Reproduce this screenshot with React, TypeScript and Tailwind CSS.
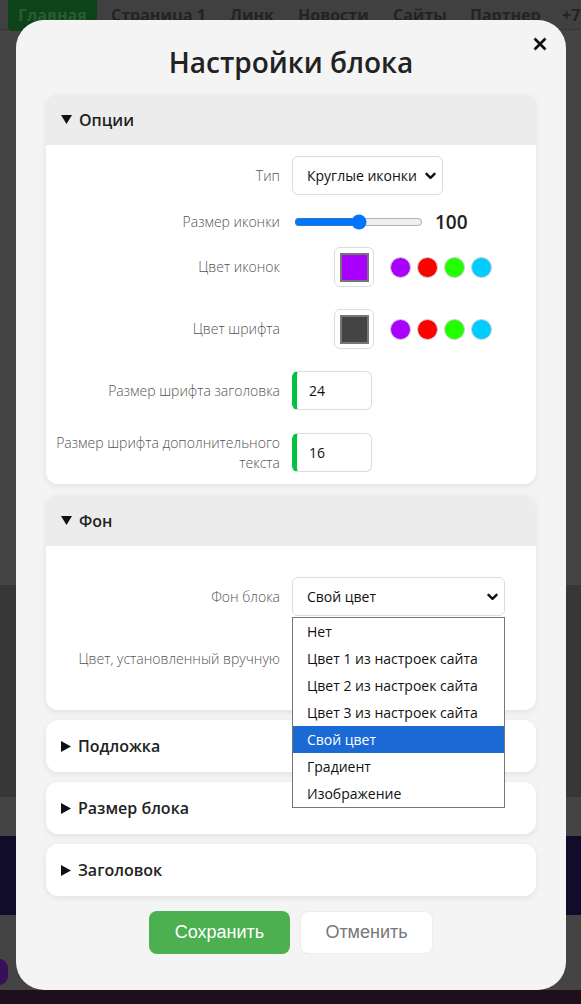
import React from "react";

const labelCls =
  "w-[234px] shrink-0 text-right text-[14px] font-light leading-[20px] text-[#555]";

function Chevron() {
  return (
    <svg width="11" height="8" viewBox="0 0 11 8" className="shrink-0">
      <polyline points="1.5,1.8 5.5,5.8 9.5,1.8" fill="none" stroke="#111" strokeWidth="2.4" strokeLinecap="round" strokeLinejoin="round" />
    </svg>
  );
}

function TriDown() {
  return (
    <svg width="11" height="9" viewBox="0 0 11 9" className="shrink-0">
      <polygon points="0,0 11,0 5.5,9" fill="#111" />
    </svg>
  );
}

function TriRight() {
  return (
    <svg width="10" height="11" viewBox="0 0 10 11" className="shrink-0">
      <polygon points="0,0 10,5.5 0,11" fill="#111" />
    </svg>
  );
}

function Swatch({ color }: { color: string }) {
  return (
    <div className="ml-[42px] flex h-[40px] w-[40px] items-center justify-center rounded-[6px] border border-[#dcdcdc] bg-white">
      <div className="h-[29px] w-[29px] border-2 border-[#767676]" style={{ background: color }} />
    </div>
  );
}

function Dots() {
  const colors = ["#aa00ff", "#ff0000", "#22ff00", "#00ccff"];
  return (
    <div className="ml-[16px] flex gap-[6px]">
      {colors.map((c) => (
        <div key={c} className="h-[21px] w-[21px] rounded-full border border-[#d0d0d0]" style={{ background: c }} />
      ))}
    </div>
  );
}

function NumInput({ value }: { value: string }) {
  return (
    <div className="flex h-[39px] w-[80px] items-center rounded-[6px] border border-l-[5px] border-[#dcdcdc] border-l-[#00c43f] bg-white pl-[12px] text-[14px] text-[#111]">
      {value}
    </div>
  );
}

function Collapsed({ title }: { title: string }) {
  return (
    <div className="flex h-[52px] items-center gap-[7px] rounded-[12px] bg-white pl-[15px] text-[16px] font-semibold text-[#222] shadow-[0_2px_6px_rgba(0,0,0,0.08)]">
      <TriRight />
      <span>{title}</span>
    </div>
  );
}

export default function App() {
  const options = [
    "Нет",
    "Цвет 1 из настроек сайта",
    "Цвет 2 из настроек сайта",
    "Цвет 3 из настроек сайта",
    "Свой цвет",
    "Градиент",
    "Изображение",
  ];

  return (
    <div className="relative h-[1004px] w-[581px] overflow-hidden bg-[#444]" style={{ fontFamily: "'Open Sans', 'Noto Sans', sans-serif" }}>
      {/* page behind the dimmed overlay */}
      <div className="flex h-[29px] items-start whitespace-nowrap bg-[#404040] pl-[8px] text-[16px] font-bold text-[#232323]">
        <div className="w-[89px] rounded-b-[4px] bg-[#0c4318] pb-[4px] pl-[10px] pt-[3px] text-[#2c5a34]">Главная</div>
        <div className="ml-[14px] w-[119px] pt-[3px]">Страница 1</div>
        <div className="w-[68px] pt-[3px]">Линк</div>
        <div className="w-[95px] pt-[3px]">Новости</div>
        <div className="w-[77px] pt-[3px]">Сайты</div>
        <div className="w-[92px] pt-[3px]">Партнер</div>
        <div className="pt-[3px]">+7</div>
      </div>
      <div className="h-[1px] bg-[#353535]" />
      <div className="h-[555px] bg-[#444]" />
      <div className="h-[212px] bg-[#373737]" />
      <div className="h-[39px] bg-[#444]" />
      <div className="h-[79px] bg-[#120c2b]" />
      <div className="relative h-[75px] bg-[#444]">
        <div className="absolute left-[-10px] top-[44px] h-[26px] w-[18px] rounded-full bg-[#3a0f5a]" />
      </div>
      <div className="h-[14px] bg-[#1f0f1d]" />

      {/* modal */}
      <div className="absolute left-[16px] top-[20px] h-[970px] w-[550px] rounded-[28px] bg-[#f4f4f4] px-[30px] pt-[22px]">
        <svg width="14" height="14" viewBox="0 0 14 14" className="absolute right-[19px] top-[17px]">
          <line x1="1.5" y1="1.5" x2="12.5" y2="12.5" stroke="#111" strokeWidth="2.6" />
          <line x1="12.5" y1="1.5" x2="1.5" y2="12.5" stroke="#111" strokeWidth="2.6" />
        </svg>
        <h1 className="h-[40px] text-center text-[28px] font-semibold leading-[40px] text-[#222]">Настройки блока</h1>

        {/* Опции */}
        <div className="mt-[12px] rounded-[12px] bg-white shadow-[0_2px_6px_rgba(0,0,0,0.08)]">
          <div className="flex h-[51px] items-center gap-[7px] rounded-t-[12px] bg-[#ececec] pl-[15px] text-[16px] font-semibold text-[#222]">
            <TriDown />
            <span>Опции</span>
          </div>
          <div className="flex flex-col pb-[12px]">
            <div className="mt-[11px] flex h-[39px] items-center gap-[12px]">
              <div className={labelCls}>Тип</div>
              <div className="flex h-[39px] w-[151px] items-center justify-between rounded-[6px] border border-[#dcdcdc] bg-white pl-[14px] pr-[6px] text-[14px] text-[#111]">
                <span>Круглые иконки</span>
                <Chevron />
              </div>
            </div>
            <div className="mt-[17px] flex h-[20px] items-center gap-[12px]">
              <div className={labelCls}>Размер иконки</div>
              <input type="range" min={0} max={200} defaultValue={100} className="m-0 ml-[2px] w-[129px] accent-[#0075ff]" />
              <span className="text-[19px] font-semibold text-[#222]">100</span>
            </div>
            <div className="mt-[15px] flex h-[40px] items-center gap-[12px]">
              <div className={labelCls}>Цвет иконок</div>
              <div className="flex items-center">
                <Swatch color="#aa00ff" />
                <Dots />
              </div>
            </div>
            <div className="mt-[22px] flex h-[40px] items-center gap-[12px]">
              <div className={labelCls}>Цвет шрифта</div>
              <div className="flex items-center">
                <Swatch color="#444444" />
                <Dots />
              </div>
            </div>
            <div className="mt-[22px] flex h-[39px] items-center gap-[12px]">
              <div className={labelCls}>Размер шрифта заголовка</div>
              <NumInput value="24" />
            </div>
            <div className="mt-[23px] flex h-[39px] items-center gap-[12px]">
              <div className={labelCls}>Размер шрифта дополнительного текста</div>
              <NumInput value="16" />
            </div>
          </div>
        </div>

        {/* Фон */}
        <div className="mt-[11px] rounded-[12px] bg-white shadow-[0_2px_6px_rgba(0,0,0,0.08)]">
          <div className="flex h-[51px] items-center gap-[7px] rounded-t-[12px] bg-[#ececec] pl-[15px] text-[16px] font-semibold text-[#222]">
            <TriDown />
            <span>Фон</span>
          </div>
          <div className="flex flex-col pb-[31px]">
            <div className="relative mt-[31px] flex h-[39px] items-center gap-[12px]">
              <div className={labelCls}>Фон блока</div>
              <div className="flex h-[39px] w-[213px] items-center justify-between rounded-[6px] border border-[#dcdcdc] bg-white pl-[14px] pr-[6px] text-[14px] text-[#111]">
                <span>Свой цвет</span>
                <Chevron />
              </div>
              {/* open option list */}
              <div className="absolute left-[246px] top-[40px] z-10 w-[213px] border border-[#767676] bg-white">
                {options.map((o) => (
                  <div
                    key={o}
                    className={
                      o === "Свой цвет"
                        ? "flex h-[27px] items-center bg-[#1a69d4] pl-[14px] text-[14px] text-white"
                        : "flex h-[27px] items-center pl-[14px] text-[14px] text-[#111]"
                    }
                  >
                    {o}
                  </div>
                ))}
              </div>
            </div>
            <div className="mt-[23px] flex h-[40px] items-center gap-[12px]">
              <div className={labelCls}>Цвет, установленный вручную</div>
            </div>
          </div>
        </div>

        <div className="mt-[10px] flex flex-col gap-[10px]">
          <Collapsed title="Подложка" />
          <Collapsed title="Размер блока" />
          <Collapsed title="Заголовок" />
        </div>

        <div className="mt-[15px] flex justify-center gap-[10px]" style={{ fontFamily: "'Liberation Sans', Arial, sans-serif" }}>
          <button className="h-[43px] w-[141px] rounded-[8px] bg-[#4caf50] text-[18px] text-white">Сохранить</button>
          <button className="h-[43px] w-[133px] rounded-[8px] border border-[#ececec] bg-white text-[18px] text-[#777]">Отменить</button>
        </div>
      </div>
    </div>
  );
}
